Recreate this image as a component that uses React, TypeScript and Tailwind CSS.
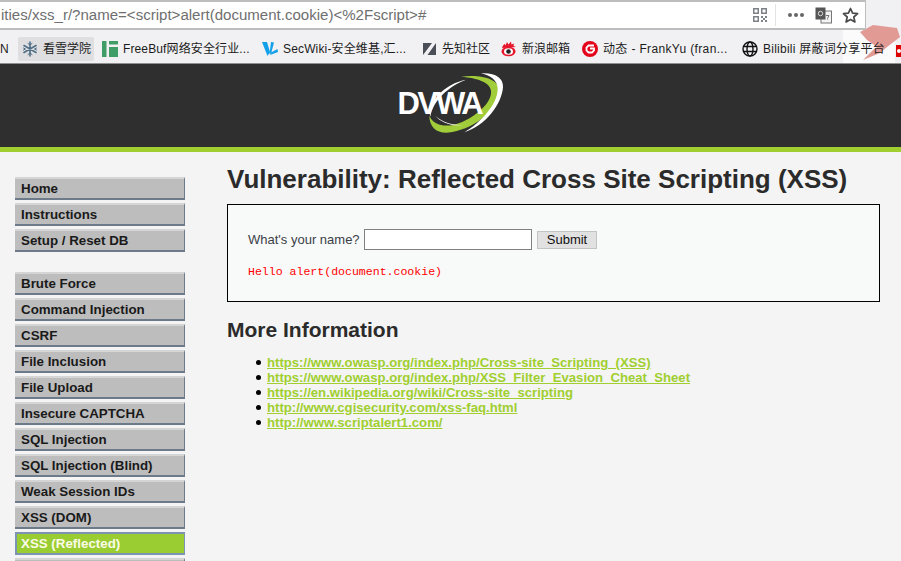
const sans = "font-['Liberation_Sans','Noto_Sans_CJK_SC',sans-serif]";

const menuGroups = [
  ["Home", "Instructions", "Setup / Reset DB"],
  [
    "Brute Force",
    "Command Injection",
    "CSRF",
    "File Inclusion",
    "File Upload",
    "Insecure CAPTCHA",
    "SQL Injection",
    "SQL Injection (Blind)",
    "Weak Session IDs",
    "XSS (DOM)",
    "XSS (Reflected)",
    "", // next row only peeks in at the bottom of the window
  ],
];

const links = [
  "https://www.owasp.org/index.php/Cross-site_Scripting_(XSS)",
  "https://www.owasp.org/index.php/XSS_Filter_Evasion_Cheat_Sheet",
  "https://en.wikipedia.org/wiki/Cross-site_scripting",
  "http://www.cgisecurity.com/xss-faq.html",
  "http://www.scriptalert1.com/",
];

function QrIcon() {
  return (
    <svg width="14" height="14" viewBox="0 0 14 14" fill="#7d8288">
      <path d="M0 0h6v6H0zM1.500 1.500v3h3v-3zM8 0h6v6H8zM9.500 1.500v3h3v-3zM0 8h6v6H0zM1.500 9.500v3h3v-3z" fillRule="evenodd" />
      <path d="M8 8h2v2H8zM12 8h2v2h-2zM10 10h2v2h-2zM8 12h2v2H8zM12 12h2v2h-2z" />
    </svg>
  );
}

function TranslateIcon() {
  return (
    <svg width="17" height="17" viewBox="0 0 17 17">
      <rect x="6" y="4" width="10.500" height="12" fill="#f3f3f3" stroke="#777" />
      <rect x="0.500" y="0.500" width="10" height="12" fill="#555" />
      <circle cx="5.500" cy="6.500" r="2.200" fill="none" stroke="#ddd" />
      <path d="M11 8.500h3l-1.500 3v1" fill="none" stroke="#777" />
    </svg>
  );
}

function StarIcon() {
  return (
    <svg width="17" height="17" viewBox="0 0 17 17" fill="none" stroke="#4b4b4b" strokeWidth="1.700" strokeLinejoin="round">
      <path d="M8.500 1.500l2.100 4.700 5 .5-3.800 3.300 1.100 5-4.400-2.600-4.400 2.600 1.100-5L1.400 6.700l5-.5z" />
    </svg>
  );
}

function KanxueIcon() {
  return (
    <svg width="16" height="16" viewBox="0 0 16 16" stroke="#4f6f86" strokeWidth="1.600" strokeLinecap="round">
      <path d="M8 1v14M2 4.500l12 7M14 4.500l-12 7" />
      <path d="M6 2.500l2 1.500 2-1.500M6 13.500l2-1.500 2 1.500M1.500 7l2 1-2 1M14.500 7l-2 1 2 1" fill="none" strokeWidth="1" />
    </svg>
  );
}

function FreeBufIcon() {
  return (
    <svg width="16" height="16" viewBox="0 0 16 16" fill="#3f9d68">
      <path d="M0 0h4.500v16H0zM7 0h9v3.500H7zM7 6h9v10H7z" />
    </svg>
  );
}

function SecWikiIcon() {
  return (
    <svg width="16" height="16" viewBox="0 0 16 16" fill="#12a0e8">
      <path d="M0 1l5 0 3 10-2.500 4zM9 1l3 .5-2.500 9.500-2 2.500zM15.500 8l.5 3-8 3 1-2.500z" />
    </svg>
  );
}

function XianzhiIcon() {
  return (
    <svg width="14" height="14" viewBox="0 0 14 14" fill="#4a4f57">
      <path d="M0 1h9L0 13zM13 1v12H4.500z" />
    </svg>
  );
}

function SinaIcon() {
  return (
    <svg width="16" height="16" viewBox="0 0 16 16">
      <path d="M1 7C2 4 3 3 4 3l.5 1.500L6 1l1.500 2.500L10 .500l.5 3L13 2.500 12.500 5 15 6z" fill="#e6162d" />
      <ellipse cx="7.500" cy="10.500" rx="7" ry="4.800" fill="#e6162d" />
      <ellipse cx="7.500" cy="10.500" rx="4.500" ry="3.200" fill="#fff" />
      <circle cx="7.500" cy="10.500" r="2.300" fill="#222" />
    </svg>
  );
}

function GiteeIcon() {
  return (
    <svg width="16" height="16" viewBox="0 0 16 16">
      <circle cx="8" cy="8" r="8" fill="#e3061b" />
      <path d="M12 4.500H6.500L4.500 6.500v3l2 2H10l2-2V7.500H8" fill="none" stroke="#fff" strokeWidth="1.800" />
    </svg>
  );
}

function GlobeIcon() {
  return (
    <svg width="16" height="16" viewBox="0 0 16 16" fill="none" stroke="#111" strokeWidth="1.400">
      <circle cx="8" cy="8" r="7" />
      <ellipse cx="8" cy="8" rx="3" ry="7" />
      <path d="M1.500 5.500h13M1.500 10.500h13" />
    </svg>
  );
}

function Bookmark({ icon, label, className }: { icon: React.ReactNode; label: string; className: string }) {
  return (
    <div className={`relative z-10 flex h-[24px] shrink-0 items-center gap-[5px] rounded-[2px] pl-[4px] ${className}`}>
      {icon}
      <span className="whitespace-nowrap text-[12px] text-[#1c1c1c]">{label}</span>
    </div>
  );
}

function DvwaLogo() {
  return (
    <div className="relative h-[83px] w-[160px]">
      <svg className="absolute inset-0" width="160" height="83" viewBox="0 0 480 249">
        <path d="M270 38C330 30 385 45 385 80C385 130 320 190 240 205C200 212 175 190 175 155C185 180 215 190 250 182C310 165 365 115 360 80C357 55 320 42 270 38Z" fill="#a2cd3a" />
        <path d="M330 28C370 25 398 40 396 70C392 120 345 185 280 205C330 175 380 120 380 75C380 50 360 35 330 28Z" fill="#fff" />
        <path d="M285 47C240 55 190 90 178 135C175 145 176 150 178 158C185 110 235 65 285 47Z" fill="#fff" />
        <path d="M192 155C210 175 240 187 275 183C245 183 215 175 192 155Z" fill="#fff" />
      </svg>
      <span className="absolute left-[27px] top-[24px] text-[31px] leading-[32px] font-bold tracking-[-2.300px] text-white">DVWA</span>
    </div>
  );
}

export default function App() {
  return (
    <div className={`${sans} h-[561px] w-[901px] overflow-hidden bg-[#f4f4f4]`}>
      {/* browser chrome */}
      <div className="h-[64px] bg-[#f1f1f3] border-b border-[#8f8f8f]">
        <div className="relative z-20 flex h-[30px] items-center border-t-2 border-b-2 border-r border-[#bdbdbd] bg-white w-[866px]">
          <span className="ml-px flex-1 whitespace-nowrap text-[15.050px] text-[#6f6f6f]">
            ities/xss_r/?name=&lt;script&gt;alert(document.cookie)&lt;%2Fscript&gt;#
          </span>
          <div className="flex items-center">
            <QrIcon />
            <div className="mx-[7px] ml-[8px] h-[22px] w-px bg-[#e3e3e3]" />
            <span className="mx-[5px] flex gap-[2px]">
              <i className="size-[4px] rounded-full bg-[#666]" />
              <i className="size-[4px] rounded-full bg-[#666]" />
              <i className="size-[4px] rounded-full bg-[#666]" />
            </span>
            <div className="ml-[6px]"><TranslateIcon /></div>
            <div className="ml-[10px] mr-[6px]"><StarIcon /></div>
          </div>
        </div>
        <div className="relative flex h-[33px] items-center pt-[5px]">
          <span className="w-[18px] text-[12px] text-[#1c1c1c]">N</span>
          <Bookmark className="mr-[4px] w-[76px] bg-[#dfdfe1]" icon={<KanxueIcon />} label="看雪学院" />
          <Bookmark className="w-[160px] tracking-[0.120px]" icon={<FreeBufIcon />} label="FreeBuf网络安全行业..." />
          <Bookmark className="w-[161px] tracking-[0.150px]" icon={<SecWikiIcon />} label="SecWiki-安全维基,汇..." />
          <Bookmark className="w-[78px]" icon={<XianzhiIcon />} label="先知社区" />
          <Bookmark className="w-[81px]" icon={<SinaIcon />} label="新浪邮箱" />
          <Bookmark className="w-[160px] tracking-[0.350px]" icon={<GiteeIcon />} label="动态 - FrankYu (fran..." />
          <Bookmark className="w-[150px] tracking-[0.250px]" icon={<GlobeIcon />} label="Bilibili 屏蔽词分享平台" />
          <div className="absolute right-[6px] top-0 h-[33px] w-[52px] bg-white/70" />
          <svg className="absolute right-0 top-[-5px]" width="41" height="38" viewBox="0 0 41 38" fill="#e29a94">
            <path d="M0 7L13 0 37 3 40 12 27 22 20 28 3 35 13 25 17 22 7 15Z" />
          </svg>
          <div className="absolute right-0 top-[15px] flex h-[12px] w-[5px] items-center bg-[#d00] pl-[1px]">
            <i className="size-[4px] rounded-full bg-white" />
          </div>
        </div>
      </div>

      {/* DVWA header */}
      <div className="flex h-[83px] justify-center bg-[#2f2f2f]">
        <DvwaLogo />
      </div>
      <div className="h-[5px] bg-[#a0cf2f]" />

      <div className="flex pl-[15px] pt-[25px]">
        {/* sidebar */}
        <div className="flex w-[170px] shrink-0 flex-col gap-[20px]">
          {menuGroups.map((group) => (
            <ul key={group[0]} className="flex flex-col gap-[3px]">
              {group.map((item) => {
                const active = item === "XSS (Reflected)";
                return (
                  <li
                    key={item}
                    className={`flex h-[23px] items-center border-t-2 border-b-2 border-r text-[13.330px] font-bold ${
                      active
                        ? "border-l-2 border-[#7c93b3] bg-[#9acd32] pl-[4px] text-[#fbfbe8]"
                        : "border-t-[#d5d5d5] border-b-[#6d7a8a] border-r-[#6d7a8a] bg-[#bdbdbd] pl-[6px] text-[#1a1a1a]"
                    }`}
                  >
                    {item}
                  </li>
                );
              })}
            </ul>
          ))}
        </div>

        {/* main */}
        <div className="ml-[42px] w-[653px] text-[#2b2b2b]">
          <h1 className="mt-[-14px] text-[26px] leading-[32px] font-bold">Vulnerability: Reflected Cross Site Scripting (XSS)</h1>
          <div className="mt-[9px] h-[98px] border border-black bg-[#f8f9f9] pl-[20px] pt-[24px]">
            <div className="flex items-center text-[13px] text-[#3a3f47]">
              <span className="w-[112px]">What's your name?</span>
              <div className="ml-[4px] h-[21px] w-[168px] border border-[#808080] bg-white" />
              <button className="ml-[5px] h-[18px] w-[60px] border border-[#c3c3c3] bg-[#e1e1e1] text-[13px] leading-[16px] text-[#111]">Submit</button>
            </div>
            <div className="mt-[15px] font-['Liberation_Mono','Noto_Sans_CJK_SC',monospace] text-[11.550px] leading-[14px] text-[#f00]">
              Hello alert(document.cookie)
            </div>
          </div>
          <h2 className="mt-[16px] text-[21px] leading-[24px] font-bold">More Information</h2>
          <ul className="mt-[13px] pl-[29px] text-[13.150px] leading-[15px] font-bold">
            {links.map((l) => (
              <li key={l} className="flex items-center gap-[6px]">
                <i className="size-[5px] rounded-full bg-black" />
                <a className="text-[#a0cf2f] underline">{l}</a>
              </li>
            ))}
          </ul>
        </div>
      </div>
    </div>
  );
}
